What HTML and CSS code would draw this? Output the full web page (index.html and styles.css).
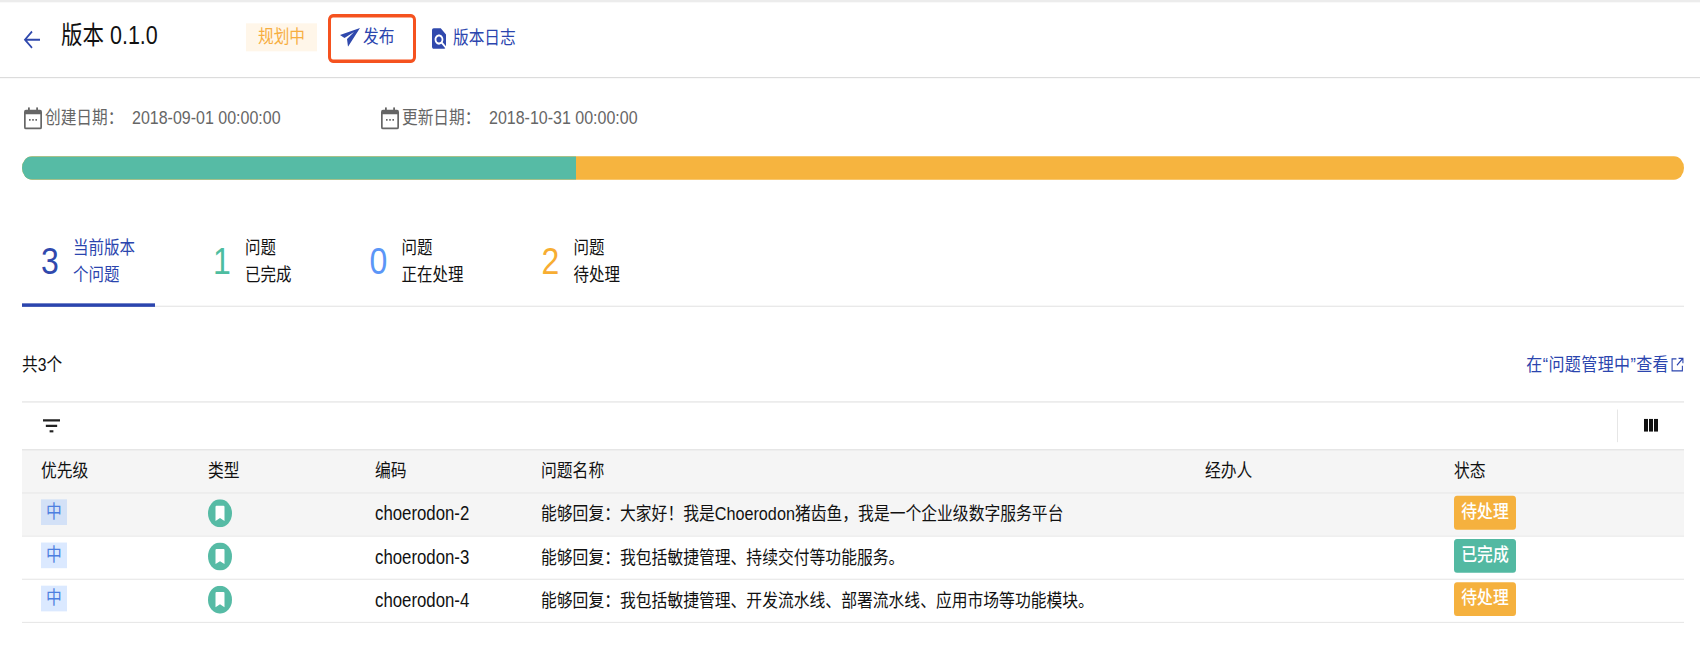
FILE: index.html
```html
<!DOCTYPE html>
<html lang="zh-CN">
<head>
<meta charset="utf-8">
<title>版本 0.1.0</title>
<link rel="stylesheet" href="styles.css">
</head>
<body>
<div class="page">
  <header class="header">
    <svg class="back" viewBox="0 0 18 18"><path d="M17 9H2M9 2 2 9l7 7"/></svg>
    <h1 class="title">版本 0.1.0</h1>
    <span class="phase">规划中</span>
    <button class="publish">
      <svg class="send" viewBox="0 0 20 16"><path d="M0 6 20 0 8 16 7 9.500 14 3.500 4.500 8.500z"/></svg>
      发布
    </button>
    <a class="log">
      <svg class="log-icon" viewBox="4 2 16 20"><path d="M20 19.59V8l-6-6H6c-1.1 0-1.99.9-1.99 2L4 20c0 1.1.89 2 1.99 2H18c.45 0 .85-.15 1.19-.4l-4.43-4.43c-.8.52-1.74.83-2.76.83-2.76 0-5-2.24-5-5s2.24-5 5-5 5 2.24 5 5c0 1.02-.31 1.96-.83 2.75L20 19.59zM9 13c0 1.66 1.34 3 3 3s3-1.34 3-3-1.34-3-3-3-3 1.34-3 3z"/></svg>
      版本日志
    </a>
  </header>
  <main class="main">
    <div class="meta">
      <div class="meta-item meta-first">
        <svg class="cal" viewBox="0 0 18 19"><path d="M4 0h1.800v3H4zM12.200 0H14v3h-1.800z"/><path fill-rule="evenodd" d="M2 2h14a2 2 0 0 1 2 2v13a2 2 0 0 1-2 2H2a2 2 0 0 1-2-2V4a2 2 0 0 1 2-2zm-.3 4V17.300h14.600V6z"/><path d="M5 10h1.600v1.600H5zM8.200 10h1.600v1.600H8.200zM11.400 10H13v1.600h-1.600z"/></svg>
        <span class="meta-label">创建日期：</span><span class="meta-value">2018-09-01 00:00:00</span>
      </div>
      <div class="meta-item">
        <svg class="cal" viewBox="0 0 18 19"><path d="M4 0h1.800v3H4zM12.200 0H14v3h-1.800z"/><path fill-rule="evenodd" d="M2 2h14a2 2 0 0 1 2 2v13a2 2 0 0 1-2 2H2a2 2 0 0 1-2-2V4a2 2 0 0 1 2-2zm-.3 4V17.300h14.600V6z"/><path d="M5 10h1.600v1.600H5zM8.200 10h1.600v1.600H8.200zM11.400 10H13v1.600h-1.600z"/></svg>
        <span class="meta-label">更新日期：</span><span class="meta-value">2018-10-31 00:00:00</span>
      </div>
    </div>
    <div class="progress"><div class="progress-done"></div></div>
    <nav class="tabs">
      <div class="tab active"><span class="num num-blue">3</span><span class="tab-text">当前版本<br>个问题</span></div>
      <div class="tab"><span class="num num-green">1</span><span class="tab-text">问题<br>已完成</span></div>
      <div class="tab"><span class="num num-sky">0</span><span class="tab-text">问题<br>正在处理</span></div>
      <div class="tab"><span class="num num-orange">2</span><span class="tab-text">问题<br>待处理</span></div>
    </nav>
    <div class="count-row">
      <span>共3个</span>
      <a class="manage">在“问题管理中”查看<svg class="open" viewBox="0 0 12 12"><path d="M5 1.500H1V11h9.500V7M7 1h4v4M11 1 5.500 6.500"/></svg></a>
    </div>
    <div class="toolbar">
      <svg class="filter" viewBox="3 6 18 12"><path d="M10 18h4v-2h-4v2zM3 6v2h18V6H3zm3 7h12v-2H6v2z"/></svg>
      <div class="columns"><svg class="columns-icon" viewBox="0 0 14 11"><path d="M0 0h4v11H0zM5 0h4v11H5zM10 0h4v11h-4z"/></svg></div>
    </div>
    <table class="issues">
      <colgroup><col class="c1"><col class="c2"><col class="c3"><col class="c4"><col class="c5"><col class="c6"></colgroup>
      <thead>
        <tr><th>优先级</th><th>类型</th><th>编码</th><th>问题名称</th><th>经办人</th><th>状态</th></tr>
      </thead>
      <tbody>
        <tr class="hover">
          <td><span class="priority">中</span></td>
          <td><svg class="type" viewBox="0 0 24 24"><circle cx="12" cy="12" r="12"/><path class="mark" d="M8.500 5.500h7a1 1 0 0 1 1 1v12L12 16l-4.500 2.500v-12a1 1 0 0 1 1-1z"/></svg></td>
          <td class="code">choerodon-2</td>
          <td>能够回复：大家好！我是<span class="latin">Choerodon</span>猪齿鱼，我是一个企业级数字服务平台</td>
          <td></td>
          <td><span class="status todo">待处理</span></td>
        </tr>
        <tr>
          <td><span class="priority">中</span></td>
          <td><svg class="type" viewBox="0 0 24 24"><circle cx="12" cy="12" r="12"/><path class="mark" d="M8.500 5.500h7a1 1 0 0 1 1 1v12L12 16l-4.500 2.500v-12a1 1 0 0 1 1-1z"/></svg></td>
          <td class="code">choerodon-3</td>
          <td>能够回复：我包括敏捷管理、持续交付等功能服务。</td>
          <td></td>
          <td><span class="status done">已完成</span></td>
        </tr>
        <tr>
          <td><span class="priority">中</span></td>
          <td><svg class="type" viewBox="0 0 24 24"><circle cx="12" cy="12" r="12"/><path class="mark" d="M8.500 5.500h7a1 1 0 0 1 1 1v12L12 16l-4.500 2.500v-12a1 1 0 0 1 1-1z"/></svg></td>
          <td class="code">choerodon-4</td>
          <td>能够回复：我包括敏捷管理、开发流水线、部署流水线、应用市场等功能模块。</td>
          <td></td>
          <td><span class="status todo">待处理</span></td>
        </tr>
      </tbody>
    </table>
  </main>
</div>
</body>
</html>
```

FILE: styles.css
```css
* { box-sizing: border-box; }
html, body { margin: 0; height: 100%; overflow: hidden; background: #fff; }
.page {
  width: 1700px;
  transform: scaleY(1.1667);
  transform-origin: 0 0;
  font: 15.7px/20px "Liberation Sans", "Noto Sans CJK SC", sans-serif;
  color: #111;
}
.header {
  display: flex;
  align-items: center;
  height: 67px;
  padding: 0 0 5px 23px;
  border-top: 2px solid #ececec;
  border-bottom: 1.5px solid #dcdcdc;
}
.back { width: 18px; height: 18px; margin-top: 5px; fill: none; stroke: #3049ad; stroke-width: 1.7; }
.title { margin: 0 0 1px 20px; width: 95px; font-size: 21.5px; font-weight: 400; white-space: nowrap; }
.phase {
  margin-left: 90px; width: 71px; height: 24px;
  display: flex; align-items: center; justify-content: center;
  background: #fff6e9; color: #f7ae42;
}
.publish {
  display: flex; align-items: center; gap: 3px;
  margin: 2px 0 0 11px; width: 88px; height: 42px; padding: 0 0 2px 9px;
  border: 3px solid #f5521f; border-radius: 5px;
  background: #fff; color: #2b45ae; font: inherit;
}
.send { width: 20px; height: 16px; fill: #3049ad; }
.log { display: flex; align-items: center; gap: 7px; margin: 2px 0 0 16px; color: #2b45ae; }
.log-icon { width: 14px; height: 18px; fill: #3049ad; }

.main { padding: 0 16px 0 22px; }
.meta { display: flex; padding: 24px 0 0 2px; color: #666; }
.meta-item { display: flex; align-items: center; width: 359px; }
.meta-first { width: 357px; }
.cal { width: 18px; height: 19px; margin: 1px 3px 0 0; fill: #666; }
.meta-label { width: 87px; white-space: nowrap; }
.meta-value { font-size: 16px; }
.progress { margin-top: 23px; height: 19.5px; border-radius: 10px; background: #f6b43f; overflow: hidden; }
.progress-done { width: 554px; height: 100%; background: #56bba5; }

.tabs { display: flex; gap: 39px; margin-top: 47.5px; border-bottom: 1px solid #e6e6e6; }
.tab { display: flex; align-items: center; gap: 15px; padding: 0 20px 12.5px 19px; margin-bottom: -1px; border-bottom: 3px solid transparent; }
.tab.active { border-bottom-color: #2b45ae; color: #2b45ae; }
.tab-text { font-size: 15.5px; line-height: 23px; white-space: nowrap; }
.num { font-size: 32px; line-height: 46px; width: 17px; }
.num-blue { color: #3049ad; }
.num-green { color: #4dbda0; }
.num-sky { color: #5b96f7; }
.num-orange { color: #f7ad32; }

.count-row { display: flex; justify-content: space-between; margin-top: 40px; height: 20px; }
.manage { display: flex; align-items: center; gap: 2px; font-size: 16px; letter-spacing: 0.4px; color: #2b45ae; }
.open { width: 13px; height: 13px; fill: none; stroke: #2b45ae; stroke-width: 1; }

.toolbar {
  display: flex; align-items: center; justify-content: space-between;
  margin-top: 21px; height: 41px; padding-left: 21px;
  border-top: 1.5px solid #e2e2e2;
}
.filter { width: 17px; height: 12px; fill: #222; }
.columns { display: flex; align-items: center; justify-content: center; width: 67px; height: 28px; border-left: 1.5px solid #e6e6e6; }
.columns-icon { width: 14px; height: 11px; fill: #111; }

.issues { width: 1662px; border-collapse: collapse; table-layout: fixed; }
.c1, .c2 { width: 167px; }
.c3 { width: 166px; }
.c4 { width: 664px; }
.c5, .c6 { width: 249px; }
.issues th, .issues td {
  height: 37px; padding: 0 0 0 19px;
  border-bottom: 1.5px solid #e8e8e8;
  font-size: 15.8px; text-align: left; font-weight: 400; white-space: nowrap;
}
.issues thead tr { background: #f5f5f5; border-top: 1.5px solid #e2e2e2; }
.issues tr.hover { background: #f5f5f5; }
.issues td.code { font-size: 16.8px; }
.latin { font-size: 16.2px; }
.priority {
  display: flex; align-items: center; justify-content: center;
  width: 26px; height: 21.5px; margin-bottom: 3px;
  background: rgba(77, 144, 254, 0.2); color: #4d7fe0;
}
.type { display: block; width: 24px; height: 24px; margin-bottom: 1px; }
.type circle { fill: #56bba5; }
.type .mark { fill: #fff; }
.status {
  display: flex; align-items: center; justify-content: center;
  width: 62px; height: 29px; margin-bottom: 3px; border-radius: 3px;
  color: #fff; font-weight: 500;
}
.todo { background: #f5b13e; }
.done { background: #53b9a2; }
```
